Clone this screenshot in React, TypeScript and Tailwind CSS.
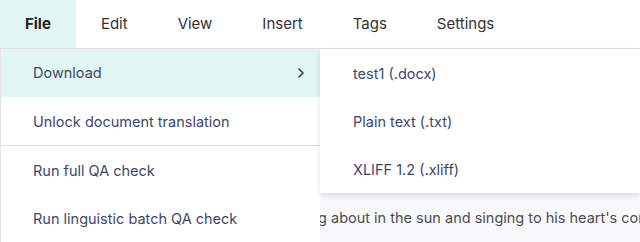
import React from "react";

const menus = ["File", "Edit", "View", "Insert", "Tags", "Settings"];

export default function App() {
  return (
    <div
      className="relative w-[640px] h-[242px] overflow-hidden bg-[#f8f9fc]"
      style={{ fontFamily: "Inter, 'Noto Sans', sans-serif" }}
    >
      <div className="flex h-[49px] bg-white border-b border-[#dcdde6]">
        {menus.map((m, i) => (
          <div
            key={m}
            className={
              "flex items-center px-[25px] text-[15px] " +
              (i === 0 ? "bg-[#e2f6f3] font-bold text-[#222]" : "text-[#333]")
            }
          >
            {m}
          </div>
        ))}
      </div>

      <div className="pt-[159px] text-[14.5px] leading-[20px] text-[#4d4d4d] whitespace-nowrap">
        <div className="flex">
          <div className="w-[327px] overflow-hidden flex justify-end shrink-0">
            <span>There once lived a grasshopper who spent his days hopping</span>
          </div>
          <span className="pl-[4px]">about in the sun and singing to his heart's content all summer long.</span>
        </div>
      </div>

      <div className="absolute left-0 top-[49px] w-[320px] bg-white border-l border-[#e3e4ea] text-[14.5px] text-[#3e4769]">
        <div className="flex items-center justify-between h-[48px] pl-[32px] pr-[14px] bg-[#e2f6f3]">
          <span>Download</span>
          <svg width="10" height="12" viewBox="0 0 10 12" fill="none">
            <path d="M3 2l4 4-4 4" stroke="#2f3a5a" strokeWidth="1.6" strokeLinecap="round" strokeLinejoin="round" />
          </svg>
        </div>
        <div className="flex items-center h-[48px] pt-[2px] pl-[32px]">
          Unlock document translation
        </div>
        <div className="h-px bg-[#dedfe6]" />
        <div className="flex items-center h-[48px] pt-[1px] pl-[32px]">Run full QA check</div>
        <div className="flex items-center h-[48px] pt-[1px] pl-[32px]">Run linguistic batch QA check</div>
      </div>

      <div className="absolute left-[320px] top-[49px] w-[320px] bg-white text-[14.5px] text-[#3e4769] shadow-[0_3px_6px_rgba(60,70,110,0.15)]">
        <div className="flex items-center h-[48px] pt-[1px] pl-[33px]">test1 (.docx)</div>
        <div className="flex items-center h-[48px] pt-[1px] pl-[33px]">Plain text (.txt)</div>
        <div className="flex items-center h-[48px] pt-[1px] pl-[33px]">XLIFF 1.2 (.xliff)</div>
      </div>
    </div>
  );
}
